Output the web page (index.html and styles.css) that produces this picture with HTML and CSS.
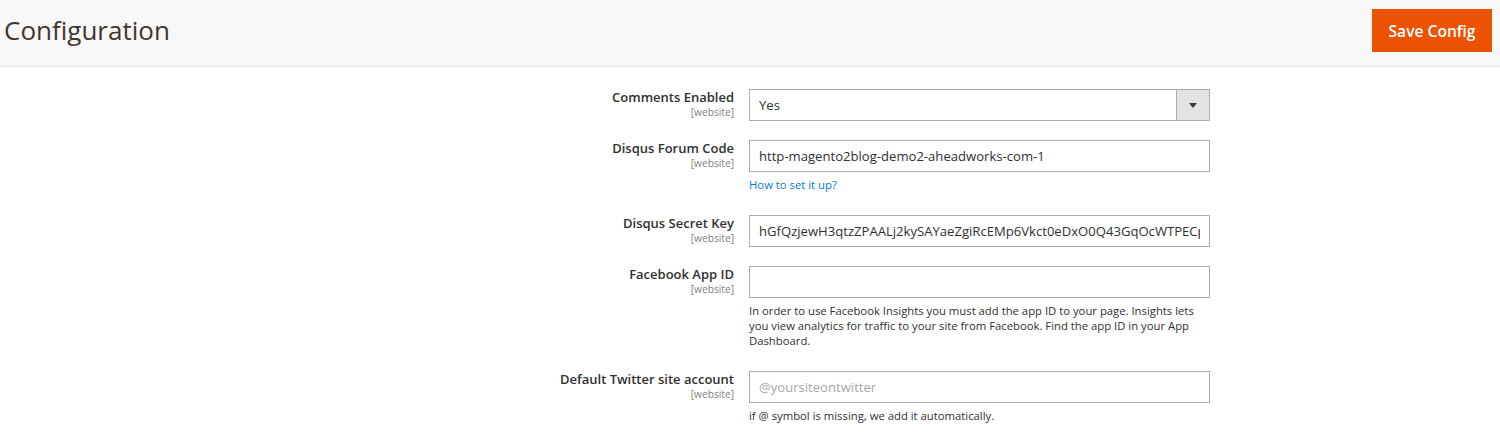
FILE: index.html
```html
<!DOCTYPE html>
<html lang="en">
<head>
<meta charset="utf-8">
<title>Configuration</title>
<link rel="stylesheet" href="styles.css">
</head>
<body>
<header class="page-header">
  <h1 class="page-title">Configuration</h1>
  <button class="btn-primary" type="button">Save Config</button>
</header>
<main class="config">
  <div class="row">
    <div class="label"><span class="label-text">Comments Enabled</span><span class="scope">[website]</span></div>
    <div class="value">
      <div class="select"><span class="select-text">Yes</span><span class="select-btn"><span class="arrow"></span></span></div>
    </div>
  </div>
  <div class="row">
    <div class="label"><span class="label-text">Disqus Forum Code</span><span class="scope">[website]</span></div>
    <div class="value">
      <input class="input" type="text" value="http-magento2blog-demo2-aheadworks-com-1">
      <p class="note"><a class="link" href="#">How to set it up?</a></p>
    </div>
  </div>
  <div class="row">
    <div class="label"><span class="label-text">Disqus Secret Key</span><span class="scope">[website]</span></div>
    <div class="value">
      <input class="input" type="text" value="hGfQzjewH3qtzZPAALj2kySAYaeZgiRcEMp6Vkct0eDxO0Q43GqOcWTPECpXk7Lr2aQ">
    </div>
  </div>
  <div class="row">
    <div class="label"><span class="label-text">Facebook App ID</span><span class="scope">[website]</span></div>
    <div class="value">
      <input class="input" type="text" value="">
      <p class="note">In order to use Facebook Insights you must add the app ID to your page. Insights lets you view analytics for traffic to your site from Facebook. Find the app ID in your App Dashboard.</p>
    </div>
  </div>
  <div class="row">
    <div class="label"><span class="label-text">Default Twitter site account</span><span class="scope">[website]</span></div>
    <div class="value">
      <input class="input" type="text" placeholder="@yoursiteontwitter">
      <p class="note">if @ symbol is missing, we add it automatically.</p>
    </div>
  </div>
</main>
</body>
</html>
```
FILE: styles.css
```css
* { box-sizing: border-box; }
html, body {
  margin: 0;
  padding: 0;
  background: #ffffff;
  font-family: "Open Sans", "Liberation Sans", Arial, sans-serif;
  color: #303030;
}
.page-header {
  height: 67px;
  background: #f8f8f8;
  border-bottom: 1px solid #e3e3e3;
  display: flex;
  align-items: flex-start;
  justify-content: space-between;
  padding: 0 8px 0 4px;
}
.page-title {
  margin: 0;
  padding-top: 12px;
  font-size: 26px;
  line-height: 36px;
  font-weight: 400;
  color: #41362f;
}
.btn-primary {
  margin-top: 9px;
  height: 43px;
  width: 120px;
  padding: 0;
  background: #eb5202;
  border: 0;
  color: #ffffff;
  font-family: "Open Sans", "Liberation Sans", Arial, sans-serif;
  font-size: 15.6px;
  font-weight: 600;
}
.config {
  padding-top: 22px;
}
.row {
  display: grid;
  grid-template-columns: 734px 461px;
  column-gap: 15px;
  padding-bottom: 19px;
}
.label {
  display: flex;
  flex-direction: column;
  align-items: flex-end;
  text-align: right;
}
.label-text {
  font-size: 13px;
  line-height: 18px;
  font-weight: 600;
  color: #303030;
  margin-top: -1px;
}
.scope {
  font-size: 10.2px;
  line-height: 12px;
  color: #808080;
}
.value {
  display: flex;
  flex-direction: column;
}
.input, .select {
  width: 461px;
  height: 32px;
  border: 1px solid #adadad;
  background: #ffffff;
  font-family: "Open Sans", "Liberation Sans", Arial, sans-serif;
  font-size: 13.1px;
  color: #303030;
  padding: 0 9px;
  margin: 0;
  outline: none;
  border-radius: 0;
}
.input::placeholder {
  color: #a6a6a6;
  opacity: 1;
}
.select {
  display: flex;
  align-items: center;
  padding: 0 0 0 9px;
}
.select-text {
  flex: 1;
}
.select-btn {
  width: 33px;
  height: 30px;
  background: #e3e3e3;
  border-left: 1px solid #adadad;
  display: flex;
  align-items: center;
  justify-content: center;
}
.arrow {
  width: 0;
  height: 0;
  border-left: 4px solid transparent;
  border-right: 4px solid transparent;
  border-top: 5px solid #41362f;
  margin-top: 1px;
}
.note {
  margin: 5px 0 4px;
  font-size: 11.3px;
  line-height: 15px;
  color: #303030;
}
.link {
  color: #007bdb;
  text-decoration: none;
}
```
